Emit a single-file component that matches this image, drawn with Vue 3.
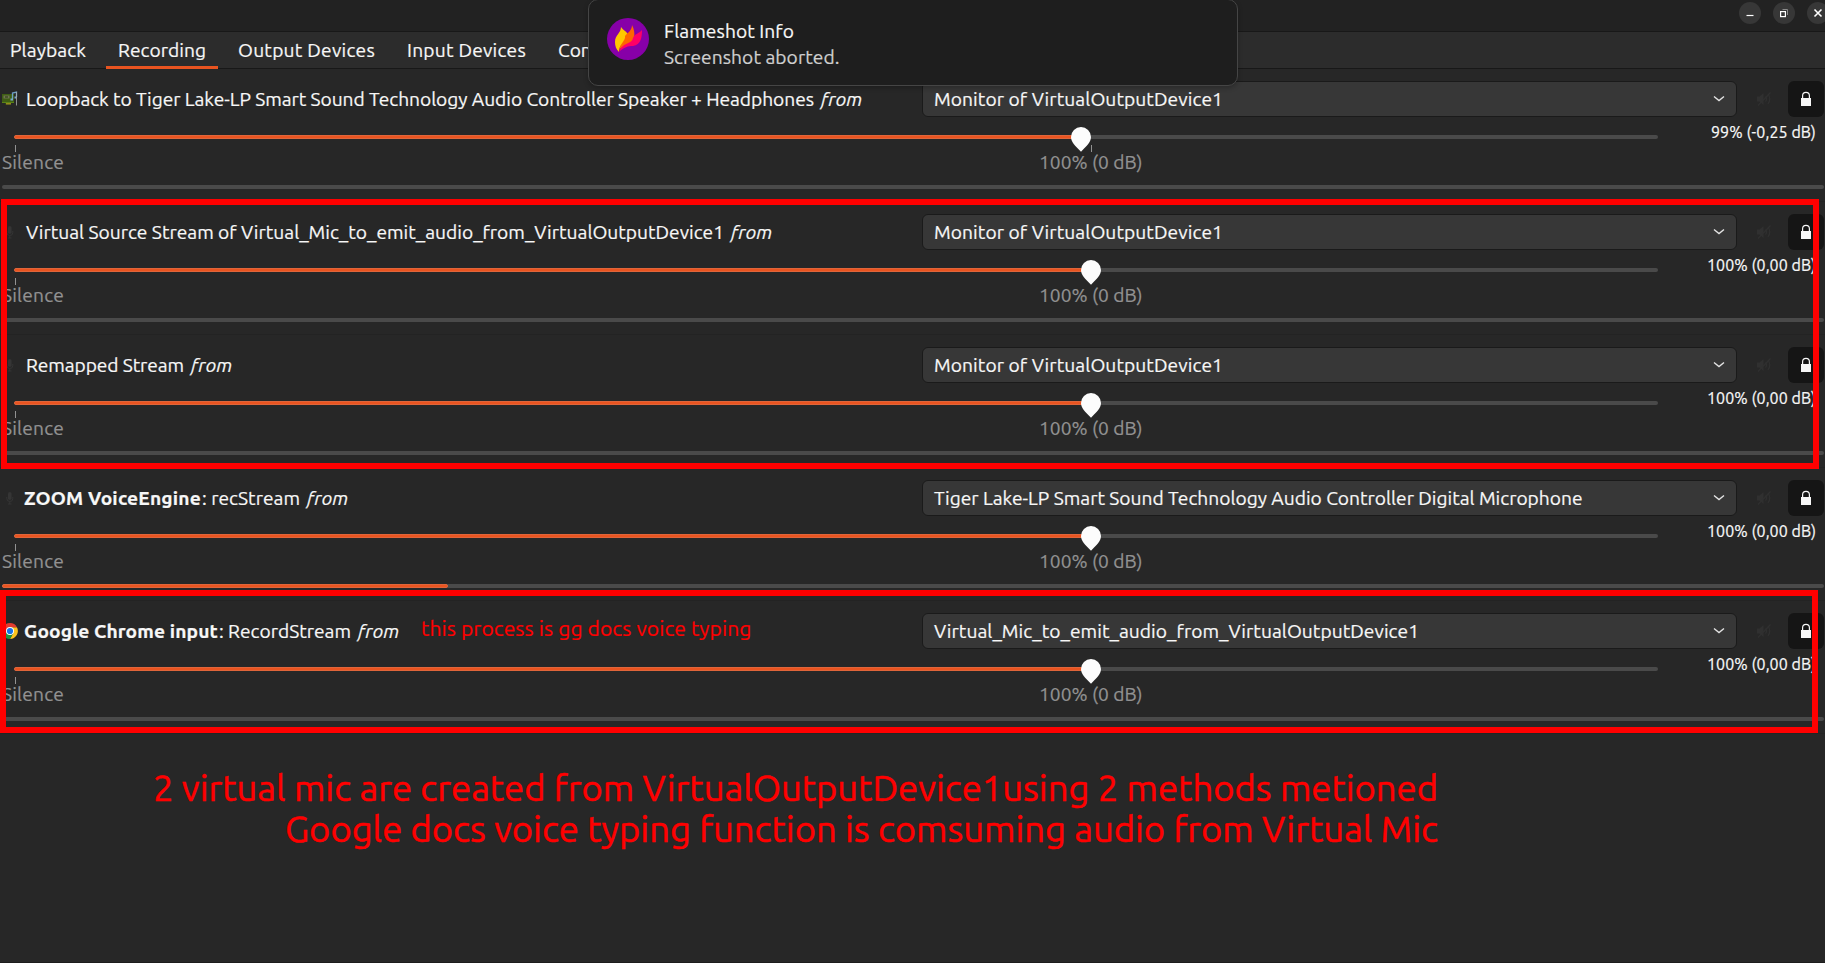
<script setup>
const tabs = [
  { label: 'Playback', width: 76 },
  { label: 'Recording', width: 88, active: true },
  { label: 'Output Devices', width: 137 },
  { label: 'Input Devices', width: 119 },
  { label: 'Configuration', width: 118 },
]

const monitor = { text: 'Monitor of VirtualOutputDevice1', width: 289 }

const streams = [
  {
    icon: 'card', title: 'Loopback to Tiger Lake-LP Smart Sound Technology Audio Controller Speaker + Headphones',
    width: 788, device: monitor, volume: '99% (-0,25 dB)', volumeWidth: 105, knob: 1067, level: 0,
  },
  {
    icon: 'mic', title: 'Virtual Source Stream of Virtual_Mic_to_emit_audio_from_VirtualOutputDevice1',
    width: 698, device: monitor, volume: '100% (0,00 dB)', volumeWidth: 109, knob: 1077, level: 0,
  },
  {
    icon: 'mic', title: 'Remapped Stream', width: 158, device: monitor,
    volume: '100% (0,00 dB)', volumeWidth: 109, knob: 1077, level: 0,
  },
  {
    icon: 'mic', app: 'ZOOM VoiceEngine', appWidth: 177, title: ': recStream', width: 98,
    device: { text: 'Tiger Lake-LP Smart Sound Technology Audio Controller Digital Microphone', width: 648.5 },
    volume: '100% (0,00 dB)', volumeWidth: 109, knob: 1077, level: 446,
  },
  {
    icon: 'chrome', app: 'Google Chrome input', appWidth: 194, title: ': RecordStream', width: 132,
    device: { text: 'Virtual_Mic_to_emit_audio_from_VirtualOutputDevice1', width: 485 },
    volume: '100% (0,00 dB)', volumeWidth: 109, knob: 1077, level: 0,
  },
]

// Spreads the letters of a label so that it fills the given width.
const vFit = {
  mounted(el, { value }) {
    const natural = el.getBoundingClientRect().width
    const count = el.textContent.length
    el.style.letterSpacing = `${(value - natural) / count}px`
    el.style.width = `${value}px`
  },
}
</script>

<template>
  <div class="window">
    <header class="titlebar">
      <span class="winbtn"><svg viewBox="0 0 22 22"><path d="M7.5 13.5h7" stroke="#fff" stroke-width="1.2" /></svg></span>
      <span class="winbtn"><svg viewBox="0 0 22 22" fill="none"><path d="M9.5 7.5h5v5.5" stroke="#8b8b8b" /><rect x="7.6" y="9.6" width="4.8" height="5" stroke="#fff" stroke-width="1.2" /></svg></span>
      <span class="winbtn"><svg viewBox="0 0 22 22"><path d="M7.5 7.5l7 7M14.5 7.5l-7 7" stroke="#fff" stroke-width="1.6" /></svg></span>
    </header>

    <nav class="tabs">
      <div v-for="t in tabs" :key="t.label" class="tab" :class="{ active: t.active }">
        <span v-fit="t.width" class="txt">{{ t.label }}</span>
      </div>
    </nav>

    <main>
      <section v-for="(s, i) in streams" :key="i" class="stream">
        <div class="head">
          <div class="name">
            <span class="icon">
              <svg v-if="s.icon === 'card'" viewBox="0 0 16 16">
                <path d="M0 3h12v9H9v1.5H3.5V12H0z" fill="#3f5e14" />
                <path d="M0 11h12v1H0z" fill="#5a8416" />
                <path d="M4 12h5v1.5H4z" fill="#96881c" />
                <path d="M1.5 4.5h6v3h-6z" fill="#6f7550" />
                <path d="M3 5.5h3v1H3z" fill="#26320f" />
                <path d="M10.5 8V2l4-1v5" fill="none" stroke="#6c9fc4" stroke-width="1.3" />
                <path d="M8.500 8.5h2.5M12.5 6.5h2" stroke="#79aacc" stroke-width="2" />
                <path d="M14.5 1v13.5" stroke="#a8adab" stroke-width=".8" />
              </svg>
              <svg v-else-if="s.icon === 'mic'" viewBox="0 0 16 16" fill="none">
                <rect x="6" y="2" width="3.6" height="8" rx="1.8" fill="#353535" />
                <path d="M4.8 7v1.5a3 3 0 0 0 6 0V7M7.8 11.5V14M6 14h3.6" stroke="#353535" />
              </svg>
              <svg v-else viewBox="0 0 16 16">
                <path d="M8 4.2h6.93A8 8 0 0 1 8 16l3.3-6.1z" fill="#fcc31e" />
                <path d="M1.07 4A8 8 0 0 1 14.93 4.2H8L4.7 9.9z" fill="#e33b2e" />
                <path d="M4.7 9.9L1.07 4A8 8 0 0 0 8 16l3.3-6.1z" fill="#229342" />
                <circle cx="8" cy="8" r="4" fill="#fff" />
                <circle cx="8" cy="8" r="3.1" fill="#1a73e8" />
              </svg>
            </span>
            <b v-if="s.app" v-fit="s.appWidth" class="txt app">{{ s.app }}</b>
            <span v-fit="s.width" class="txt" :class="s.app ? 'after-app' : 'plain'">{{ s.title }}</span>
            <i v-fit="41.5" class="txt from">from</i>
          </div>
          <div class="select">
            <span v-fit="s.device.width" class="txt">{{ s.device.text }}</span>
            <svg class="chevron" viewBox="0 0 12 8"><path d="M1 1.5l5 4 5-4" fill="none" stroke="#e4e4e4" stroke-width="1.4" /></svg>
          </div>
          <svg class="mute" viewBox="0 0 16 16" fill="none">
            <path d="M1 5.5h2.500L7.5 2v12L3.5 10.5H1z" fill="#303030" />
            <path d="M9.5 5.5q2 2.5 0 5M12 3q3.5 5 0 10M2 14.5L14.5 1.5" stroke="#303030" stroke-width="1.2" />
          </svg>
          <div class="lock">
            <svg viewBox="0 0 12 16"><path d="M2.6 8V4.8a3.4 3.4 0 0 1 6.8 0V8" fill="none" stroke="#f7f7f7" stroke-width="1.2" /><path d="M1 7h10v8H1z" fill="#f7f7f7" /></svg>
          </div>
        </div>

        <div class="body">
          <div class="scale">
            <div class="track">
              <div class="fill" :style="{ width: s.knob + 'px' }"></div>
              <svg class="knob" :style="{ left: s.knob - 10 + 'px' }" viewBox="0 0 20 25"><path d="M10 0A10 10 0 0 1 20 10C20 15 16 18.5 10 24.8 4 18.5 0 15 0 10A10 10 0 0 1 10 0z" fill="#fcfcfc" /></svg>
            </div>
            <div class="ticks"><span></span><span v-if="i === 0"></span></div>
            <div class="marks">
              <span v-fit="62" class="txt">Silence</span>
              <span v-fit="103.5" class="txt">100% (0 dB)</span>
            </div>
          </div>
          <div class="volume"><span v-fit="s.volumeWidth" class="txt">{{ s.volume }}</span></div>
        </div>
        <div class="level"><div v-if="s.level" class="fill" :style="{ width: s.level + 'px' }"></div></div>
      </section>
    </main>

    <aside class="toast">
      <svg class="flame" viewBox="0 0 42 42">
        <circle cx="21" cy="21" r="21" fill="#8700a8" />
        <path d="M14 9C14 15 8 17 8 24c0 4 1 7 4 10 0-4 1-6 5-9 4-4 5-7 3-10-1-2-4-3-6-6z" fill="#ffc800" />
        <path d="M25 7c0 6-5 8-7 11 1 4-5 8-6 14 4-5 13-5 15-12 1-5 0-9-2-13z" fill="#ff6600" />
        <path d="M35 12c-2 3-8 4-9 8-1 5-7 5-10 8-2 2-3 3-4 6 5-5 9-6 14-6 8-1 9-9 9-16z" fill="#ff0066" />
      </svg>
      <div class="toast-text">
        <span v-fit="130" class="txt">Flameshot Info</span>
        <span v-fit="175.5" class="txt dim">Screenshot aborted.</span>
      </div>
    </aside>

    <div class="mark first"></div>
    <div class="mark second"></div>
    <span v-fit="330.5" class="note txt">this process is gg docs voice typing</span>
    <div class="caption">
      <span v-fit="1285" class="txt">2 virtual mic are created from VirtualOutputDevice1using 2 methods metioned</span>
      <span v-fit="1153" class="txt">Google docs voice typing function is comsuming audio from Virtual Mic</span>
    </div>
  </div>
</template>

<style>
body { margin: 0; background: #272727; overflow: hidden; }
</style>

<style scoped>
.window {
  position: relative;
  box-sizing: border-box;
  width: 1825px;
  height: 963px;
  overflow: hidden;
  background: #272727;
  border-bottom: 1px solid #1c1c1c;
  color: #f7f7f7;
  font-family: Ubuntu, "Noto Sans", sans-serif;
  font-size: 19.2px;
  -webkit-text-stroke: .2px currentColor;
}
.txt { display: inline-block; flex: none; white-space: pre; }
svg { display: block; }

.titlebar {
  box-sizing: border-box;
  height: 32px;
  padding: 2px 0 0 1739px;
  display: flex;
  gap: 12px;
  background: #222;
  border-bottom: 1px solid #181818;
}
.winbtn { flex: none; width: 22px; height: 22px; border-radius: 50%; background: #373737; }

.tabs {
  box-sizing: border-box;
  height: 37px;
  display: flex;
  background: #2c2c2c;
  border-bottom: 1px solid #181818;
  padding-left: 10px;
  gap: 32px;
}
.tab { position: relative; line-height: 36px; height: 37px; }
.tab.active::after {
  content: "";
  position: absolute;
  left: -12px;
  right: -12px;
  bottom: 0;
  height: 3px;
  background: #e95420;
}

.stream { box-sizing: border-box; height: 133px; padding: 12px 1px 0 2px; border-bottom: 1px solid #232323; }
.head { display: flex; height: 36px; align-items: center; }
.name { width: 920px; display: flex; align-items: center; line-height: 36px; }
.icon { width: 16px; height: 16px; flex: none; }
.plain { margin-left: 8px; }
.app { margin-left: 6px; }
.after-app { margin-left: 1px; }
.from { margin-left: 7px; }
.select {
  box-sizing: border-box;
  width: 815px;
  height: 36px;
  padding: 0 11px;
  display: flex;
  align-items: center;
  justify-content: space-between;
  line-height: 34px;
  background: #373737;
  border: 1px solid #1a1a1a;
  border-radius: 6px;
}
.chevron { width: 12px; height: 8px; }
.mute { width: 16px; height: 16px; margin-left: 19px; }
.lock {
  width: 36px;
  height: 36px;
  margin-left: 16px;
  border-radius: 6px;
  background: #151515;
  display: flex;
  align-items: center;
  justify-content: center;
}
.lock svg { width: 12px; height: 16px; }

.body { display: flex; height: 68px; justify-content: space-between; }
.scale { width: 1656px; padding-top: 18px; }
.track { position: relative; height: 4px; margin-left: 12px; border-radius: 2px; background: #4a4a4a; }
.fill { box-sizing: border-box; height: 4px; background: #e95420; border: 1px solid #e0653a; border-radius: 2px; }
.knob { position: absolute; top: -8px; width: 20px; height: 25px; }
.ticks { display: flex; height: 7px; margin: 6px 0 0 13px; gap: 1075px; }
.ticks span { width: 1px; background: #929292; }
.marks { display: flex; color: #929292; line-height: 24px; gap: 975px; margin-top: -2px; }
.volume { padding-right: 8px; line-height: 30px; font-size: 16px; }
.level { height: 4px; border-radius: 2px; background: #4a4a4a; }

.toast {
  position: absolute;
  box-sizing: border-box;
  left: 588px;
  top: -1px;
  width: 650px;
  height: 87px;
  padding: 18px;
  display: flex;
  background: #1e1e1e;
  border: 1px solid #454545;
  border-radius: 10px;
  box-shadow: 0 2px 5px rgba(0, 0, 0, .25);
}
.flame { width: 42px; height: 42px; }
.toast-text { margin-left: 15px; display: flex; flex-direction: column; align-items: flex-start; line-height: 26px; }
.dim { color: #cfcfcf; }

.mark { position: absolute; box-sizing: border-box; border: 6px solid #f00; }
.first { left: 1px; top: 199px; width: 1818px; height: 270px; }
.second { left: 0; top: 590px; width: 1818px; height: 143px; }
.note { position: absolute; left: 421px; top: 614px; line-height: 28px; color: #f00; font-size: 21px; }
.caption {
  position: absolute;
  left: 153px;
  top: 767px;
  width: 1285px;
  display: flex;
  flex-direction: column;
  align-items: flex-end;
  line-height: 41px;
  font-size: 36.4px;
  color: #f00;
  -webkit-text-stroke: .5px #f00;
}
</style>
